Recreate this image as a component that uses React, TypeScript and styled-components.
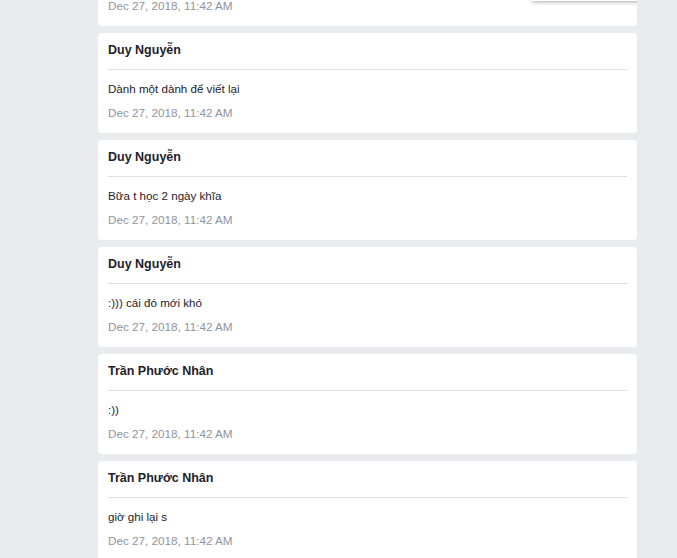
import React from 'react';
import styled, { createGlobalStyle } from 'styled-components';

interface Comment {
  author: string;
  text: string;
  time: string;
}

const comments: Comment[] = [
  { author: 'Duy Nguyễn', text: 'Ghi lại luôn cho nhớ', time: 'Dec 27, 2018, 11:42 AM' },
  { author: 'Duy Nguyễn', text: 'Dành một dành để viết lại', time: 'Dec 27, 2018, 11:42 AM' },
  { author: 'Duy Nguyễn', text: 'Bữa t học 2 ngày khĩa', time: 'Dec 27, 2018, 11:42 AM' },
  { author: 'Duy Nguyễn', text: ':))) cái đó mới khó', time: 'Dec 27, 2018, 11:42 AM' },
  { author: 'Trần Phước Nhân', text: ':))', time: 'Dec 27, 2018, 11:42 AM' },
  { author: 'Trần Phước Nhân', text: 'giờ ghi lại s', time: 'Dec 27, 2018, 11:42 AM' }
];

const GlobalStyle = createGlobalStyle`
  html, body {
    margin: 0;
    padding: 0;
    background: #e9ebee;
    overflow: hidden;
  }
  body {
    font-family: "Liberation Sans", Arial, sans-serif;
    color: #1d2129;
  }
`;

const Page = styled.div`
  position: relative;
  height: 558px;
  overflow: hidden;
  padding-left: 98px;
  width: 539px;
`;

const Feed = styled.div`
  display: flex;
  flex-direction: column;
  gap: 7px;
  margin-top: -74px;
`;

const Card = styled.div`
  background: #fff;
  border-radius: 4px;
  padding: 0 10px 12px;
  display: flex;
  flex-direction: column;
`;

const Author = styled.div`
  font-size: 12.5px;
  font-weight: bold;
  line-height: 16px;
  padding: 9px 0 11px;
  border-bottom: 1px solid #dddfe2;
`;

const Message = styled.div`
  font-size: 11.6px;
  line-height: 16px;
  margin-top: 11px;
`;

const Time = styled.div`
  font-size: 11.7px;
  line-height: 16px;
  margin-top: 8px;
  color: #90949c;
`;

const Menu = styled.div`
  position: absolute;
  top: -100px;
  left: 532px;
  width: 160px;
  height: 101px;
  background: #fff;
  box-shadow: 0 1px 4px rgba(0, 0, 0, 0.35);
`;

const App = (): JSX.Element => {
  return (
    <>
      <GlobalStyle />
      <Page>
        <Feed>
          {comments.map((c, i) => (
            <Card key={i}>
              <Author>{c.author}</Author>
              <Message>{c.text}</Message>
              <Time>{c.time}</Time>
            </Card>
          ))}
        </Feed>
        <Menu />
      </Page>
    </>
  );
};

export default App;
